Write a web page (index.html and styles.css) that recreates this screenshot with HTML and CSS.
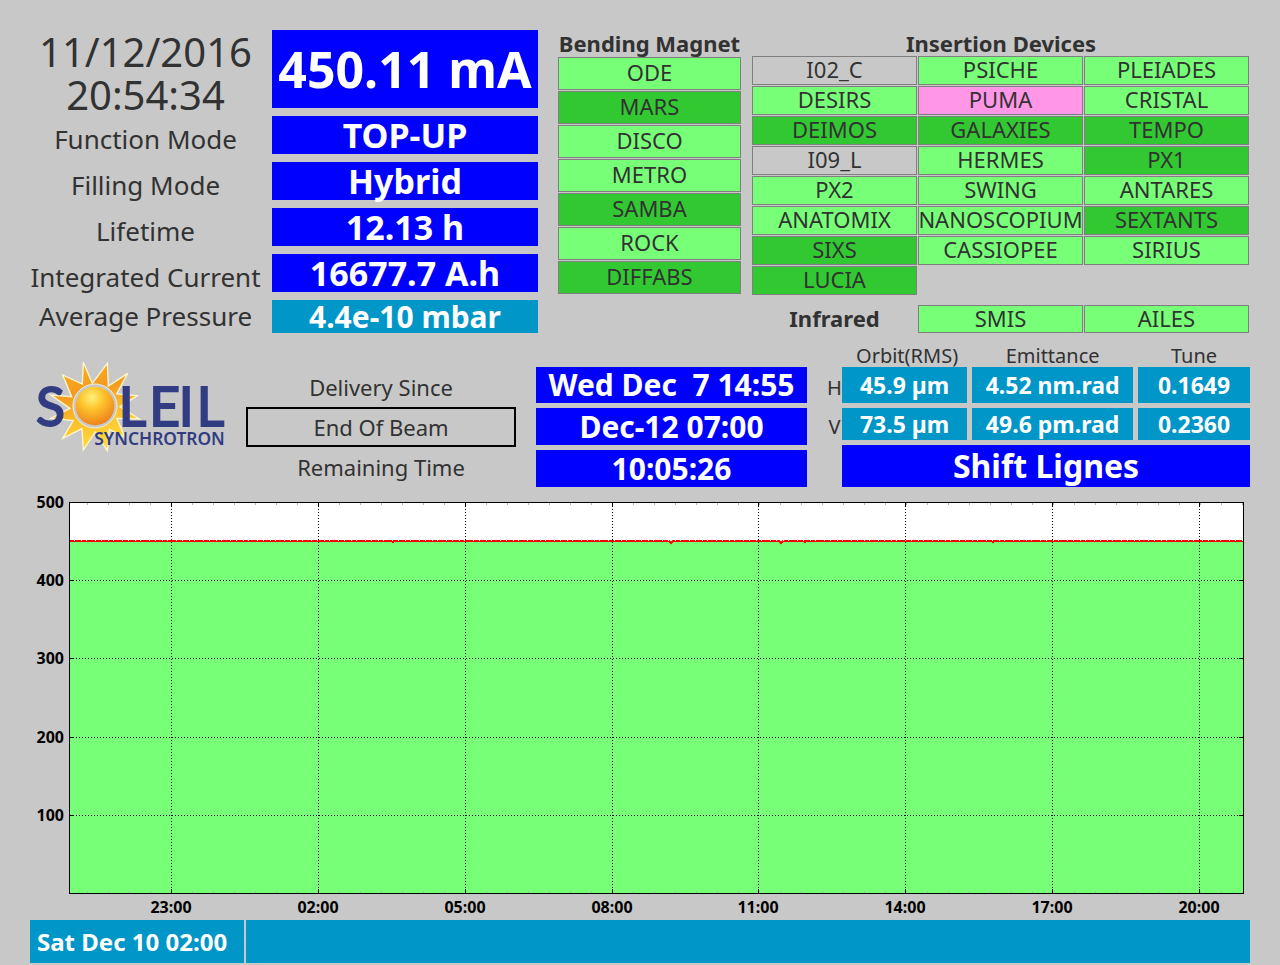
FILE: index.html
```html
<!DOCTYPE html>
<html lang="en">
<head>
<meta charset="utf-8">
<title>SOLEIL Synchrotron – Machine Status</title>
<link rel="stylesheet" href="styles.css">
</head>
<body>
<main class="board">
  <section class="top">
    <div class="summary">
      <div class="labels">
        <div class="clock">11/12/2016<br>20:54:34</div>
        <div class="label">Function Mode</div>
        <div class="label">Filling Mode</div>
        <div class="label">Lifetime</div>
        <div class="label">Integrated Current</div>
        <div class="label label-short">Average Pressure</div>
      </div>
      <div class="values">
        <div class="value value-current">450.11 mA</div>
        <div class="value">TOP-UP</div>
        <div class="value">Hybrid</div>
        <div class="value">12.13 h</div>
        <div class="value">16677.7 A.h</div>
        <div class="value value-pressure">4.4e-10 mbar</div>
      </div>
    </div>

    <div class="magnets">
      <h2 class="heading">Bending Magnet</h2>
      <ul class="cells cells-magnet">
        <li class="cell open">ODE</li>
        <li class="cell beam">MARS</li>
        <li class="cell open">DISCO</li>
        <li class="cell open">METRO</li>
        <li class="cell beam">SAMBA</li>
        <li class="cell open">ROCK</li>
        <li class="cell beam">DIFFABS</li>
      </ul>
    </div>

    <div class="devices">
      <h2 class="heading">Insertion Devices</h2>
      <ul class="cells cells-device">
        <li class="cell">I02_C</li><li class="cell open">PSICHE</li><li class="cell open">PLEIADES</li>
        <li class="cell open">DESIRS</li><li class="cell fault">PUMA</li><li class="cell open">CRISTAL</li>
        <li class="cell beam">DEIMOS</li><li class="cell beam">GALAXIES</li><li class="cell beam">TEMPO</li>
        <li class="cell">I09_L</li><li class="cell open">HERMES</li><li class="cell beam">PX1</li>
        <li class="cell open">PX2</li><li class="cell open">SWING</li><li class="cell open">ANTARES</li>
        <li class="cell open">ANATOMIX</li><li class="cell open">NANOSCOPIUM</li><li class="cell beam">SEXTANTS</li>
        <li class="cell beam">SIXS</li><li class="cell open">CASSIOPEE</li><li class="cell open">SIRIUS</li>
        <li class="cell beam">LUCIA</li>
      </ul>
      <div class="infrared">
        <h2 class="heading">Infrared</h2>
        <div class="cell open">SMIS</div>
        <div class="cell open">AILES</div>
      </div>
    </div>
  </section>

  <section class="middle">
    <svg class="logo" viewBox="30 30 588 280" role="img" aria-label="SOLEIL Synchrotron">
      <defs>
        <radialGradient id="disc" cx="0.42" cy="0.28" r="0.75">
          <stop offset="0" stop-color="#fff27a"/>
          <stop offset="0.4" stop-color="#fdc42c"/>
          <stop offset="1" stop-color="#ee7d1c"/>
        </radialGradient>
        <linearGradient id="rays" x1="0" y1="0" x2="0.3" y2="1">
          <stop offset="0" stop-color="#f9b82a"/>
          <stop offset="0.4" stop-color="#f49a1e"/>
          <stop offset="0.7" stop-color="#fbc02c"/>
          <stop offset="1" stop-color="#ffd93a"/>
        </linearGradient>
      </defs>
      <path fill="url(#rays)" stroke="#fff6cf" stroke-width="4" d="M190 37 217 100 262 40 265 108 323 70 290 132 352 137 300 170 358 207 290 205 315 262 268 238 262 302 226 246 190 300 186 236 128 265 160 212 93 205 150 175 93 135 155 140 128 75 187 102Z"/>
      <circle cx="225" cy="168" r="66" fill="#c8c8c8" stroke="#f4ecd8" stroke-width="3"/>
      <circle cx="225" cy="168" r="58" fill="url(#disc)"/>
      <text class="logo-name" y="227" x="48 296 388 476 530">SLEIL</text>
      <text class="logo-sub" x="223" y="286">SYNCHROTRON</text>
    </svg>

    <div class="schedule-labels">
      <div class="schedule-label">Delivery Since</div>
      <div class="schedule-label boxed">End Of Beam</div>
      <div class="schedule-label">Remaining Time</div>
    </div>

    <div class="schedule">
      <div class="time">Wed Dec&nbsp; 7 14:55</div>
      <div class="time">Dec-12 07:00</div>
      <div class="time">10:05:26</div>
    </div>

    <div class="optics">
      <table class="optics-table">
        <colgroup><col class="col-axis"><col class="col-orbit"><col class="col-emittance"><col class="col-tune"></colgroup>
        <thead>
          <tr><td></td><th scope="col">Orbit(RMS)</th><th scope="col">Emittance</th><th scope="col">Tune</th></tr>
        </thead>
        <tbody>
          <tr class="row-h"><th scope="row">H</th><td>45.9 µm</td><td>4.52 nm.rad</td><td>0.1649</td></tr>
          <tr class="row-v"><th scope="row">V</th><td>73.5 µm</td><td>49.6 pm.rad</td><td>0.2360</td></tr>
        </tbody>
      </table>
      <div class="shift">Shift Lignes</div>
    </div>
  </section>

  <svg class="chart" viewBox="30 489 1220 431" role="img" aria-label="Stored current over the last 24 hours">
    <defs>
      <pattern id="minor" x="87" y="502" width="21" height="392" patternUnits="userSpaceOnUse">
        <path d="M0.5 1V3M0.5 389V391" stroke="#b4b4b4"/>
      </pattern>
    </defs>
    <rect x="69" y="502" width="1175" height="392" fill="#fff"/>
    <rect x="69" y="541" width="1175" height="353" fill="#78ff78"/>
    <rect x="69" y="502" width="1175" height="392" fill="url(#minor)"/>
    <path class="trace" d="M69 541H669L671 543 673 541H779L781 543 783 541H1243"/>
    <path class="trace-gaps" d="M74 540.5H1243"/>
    <path class="dips" d="M392 542.5h2M804 542.5h2M992 542.5h2"/>
    <path class="grid-line" d="M171.5 503V893M318.5 503V893M465.5 503V893M612.5 503V893M758.5 503V893M905.5 503V893M1052.5 503V893M1199.5 503V893"/>
    <path class="grid-line" d="M70 580.5H1243M70 658.5H1243M70 737.5H1243M70 815.5H1243"/>
    <path class="axis" d="M171.5 502v5m0 382v4M318.5 502v5m0 382v4M465.5 502v5m0 382v4M612.5 502v5m0 382v4M758.5 502v5m0 382v4M905.5 502v5m0 382v4M1052.5 502v5m0 382v4M1199.5 502v5m0 382v4"/>
    <path class="axis" d="M69 580.5h5m1165 0h5M69 658.5h5m1165 0h5M69 737.5h5m1165 0h5M69 815.5h5m1165 0h5"/>
    <rect class="axis" x="69.5" y="502.5" width="1174" height="391"/>
    <g class="tick-text tick-y">
      <text x="64" y="508">500</text>
      <text x="64" y="586">400</text>
      <text x="64" y="664">300</text>
      <text x="64" y="743">200</text>
      <text x="64" y="821">100</text>
    </g>
    <g class="tick-text tick-x">
      <text x="171" y="913">23:00</text>
      <text x="318" y="913">02:00</text>
      <text x="465" y="913">05:00</text>
      <text x="612" y="913">08:00</text>
      <text x="758" y="913">11:00</text>
      <text x="905" y="913">14:00</text>
      <text x="1052" y="913">17:00</text>
      <text x="1199" y="913">20:00</text>
    </g>
  </svg>

  <footer class="message">
    <div class="message-time">Sat Dec 10 02:00</div>
    <div class="message-text"></div>
  </footer>
</main>
</body>
</html>
```

FILE: styles.css
```css
* {
  box-sizing: border-box;
}

body {
  margin: 0;
  background: #c8c8c8;
  color: #323232;
  font-family: "Noto Sans", "Open Sans", sans-serif;
}

.board {
  display: flex;
  flex-direction: column;
  padding: 30px 30px 2px;
}

.top {
  display: grid;
  grid-template-columns: 517fr 183fr 498fr;
  column-gap: 11px;
}

.summary {
  display: grid;
  grid-template-columns: 242fr 266fr;
  padding-right: 9px;
}

.labels {
  display: flex;
  flex-direction: column;
  margin-right: 11px;
  text-align: center;
  white-space: nowrap;
}

.clock {
  font-size: 40px;
  line-height: 43px;
}

.label {
  font-size: 26px;
  line-height: 46px;
}

.label-short {
  line-height: 33px;
}

.values {
  display: flex;
  flex-direction: column;
  gap: 8px;
}

.value {
  background: #0000ff;
  color: #fff;
  font-size: 34px;
  font-weight: 700;
  line-height: 38px;
  text-align: center;
  white-space: nowrap;
}

.value-current {
  font-size: 50px;
  line-height: 78px;
}

.value-pressure {
  background: #0096c8;
  font-size: 30px;
  line-height: 33px;
}

.heading {
  margin: 0;
  font-size: 22px;
  font-weight: 700;
  line-height: 26px;
  text-align: center;
  white-space: nowrap;
}

.cells {
  display: grid;
  gap: 1px;
  margin: 0;
  padding: 0;
  list-style: none;
}

.cells-magnet {
  padding-top: 1px;
}

.cells-device,
.infrared {
  grid-template-columns: repeat(3, minmax(0, 1fr));
  padding-right: 1px;
}

.infrared {
  display: grid;
  gap: 1px;
  margin-top: 10px;
}

.cell {
  display: flex;
  justify-content: center;
  padding-bottom: 2px;
  border: 1px solid #808080;
  font-size: 22px;
  line-height: 25px;
  white-space: nowrap;
}

.cells-magnet .cell {
  line-height: 29px;
}

.infrared .cell {
  line-height: 24px;
}

.open {
  background: #78ff78;
}

.beam {
  background: #32c832;
}

.fault {
  background: #ff96e6;
}

.middle {
  display: grid;
  grid-template-columns: 196fr 270fr 271fr 423fr;
  column-gap: 20px;
  margin-top: 12px;
}

.logo {
  width: 100%;
  margin-top: 15px;
}

.logo-name {
  fill: #323c82;
  stroke: #323c82;
  stroke-width: 6px;
  font-family: Lato, sans-serif;
  font-size: 160px;
}

.logo-sub {
  fill: #323c82;
  font-size: 52px;
  font-weight: 600;
}

.schedule-labels {
  padding-top: 22px;
}

.schedule-label {
  font-size: 22px;
  line-height: 40px;
  text-align: center;
}

.boxed {
  border: 2px solid #000;
  line-height: 36px;
}

.schedule {
  display: flex;
  flex-direction: column;
  gap: 5px;
  padding-top: 22px;
}

.time {
  background: #0000ff;
  color: #fff;
  font-size: 30px;
  font-weight: 700;
  line-height: 37px;
  text-align: center;
  white-space: nowrap;
}

.time:first-child {
  line-height: 36px;
}

.optics-table {
  width: 100%;
  table-layout: fixed;
  border-spacing: 0;
}

.optics-table th,
.optics-table td {
  padding: 0;
  border: 0 solid #c8c8c8;
  text-align: center;
  white-space: nowrap;
}

.optics-table th {
  font-size: 20px;
  font-weight: 400;
  line-height: 22px;
}

.optics-table thead th {
  padding-left: 5px;
}

.optics-table tbody td {
  border-bottom-width: 5px;
  background: #0096c8;
  color: #fff;
  font-size: 23px;
  font-weight: 700;
}

.optics-table td + td {
  border-left-width: 5px;
}

.row-h td {
  line-height: 36px;
}

.row-v td {
  line-height: 32px;
}

.col-axis {
  width: 15px;
}

.col-orbit {
  width: 29.6%;
}

.col-emittance {
  width: 39.2%;
}

.shift {
  margin-left: 15px;
  background: #0000ff;
  color: #fff;
  font-size: 32px;
  font-weight: 700;
  line-height: 42px;
  text-align: center;
}

.chart {
  display: block;
  width: 100%;
  margin-top: 2px;
}

.trace {
  fill: none;
  stroke: #ff0000;
  stroke-width: 2;
}

.dips {
  stroke: #ff0000;
}

.trace-gaps {
  stroke: #fff;
  stroke-dasharray: 1 6 1 4 1 8 1 5;
}

.grid-line {
  stroke: #000;
  stroke-dasharray: 1 2;
}

.axis {
  fill: none;
  stroke: #000;
}

.tick-text {
  fill: #000;
  font-size: 16px;
  font-weight: 700;
}

.tick-y {
  text-anchor: end;
}

.tick-x {
  text-anchor: middle;
}

.message {
  display: grid;
  grid-template-columns: 214fr 1004fr;
  gap: 2px;
}

.message-time,
.message-text {
  min-height: 43px;
  background: #0096c8;
  color: #fff;
  font-size: 24px;
  font-weight: 700;
  line-height: 43px;
  white-space: nowrap;
}

.message-time {
  padding-left: 7px;
}
```
